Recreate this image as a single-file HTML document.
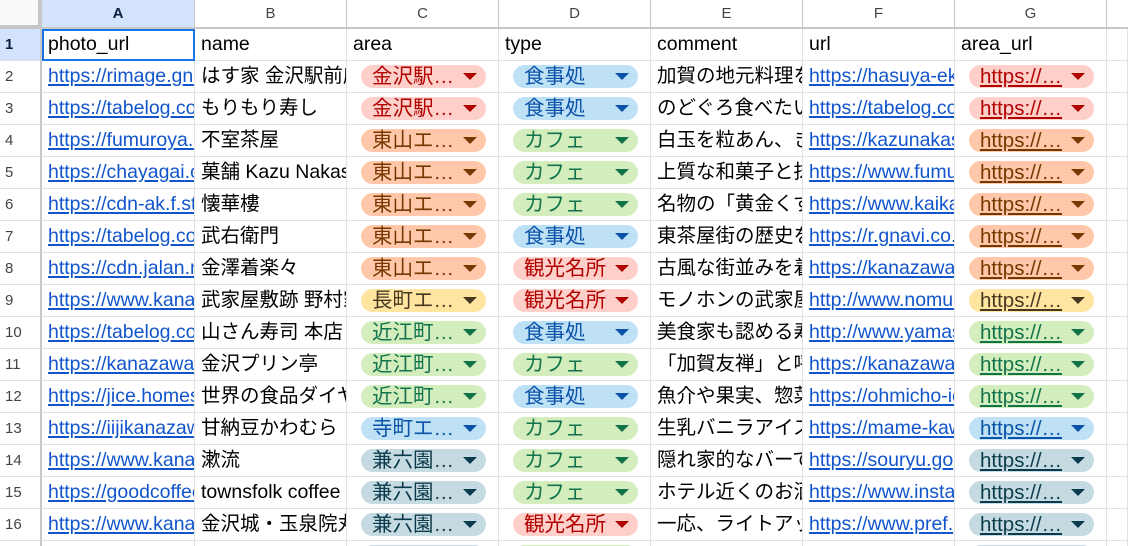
<!DOCTYPE html>
<html><head><meta charset="utf-8"><style>
*{margin:0;padding:0;box-sizing:border-box}
html,body{width:1128px;height:546px;overflow:hidden}
body{background:#fff;font-family:"Liberation Sans","Noto Sans CJK JP",sans-serif;position:relative}
.hdr{position:absolute;top:0;height:29px;border-right:1px solid #c7c7c7;border-bottom:2px solid #c7c7c7;font-size:15px;color:#444;text-align:center;line-height:28px;background:#fff}
.rh{position:absolute;left:0;width:42px;height:32px;border-right:2px solid #c7c7c7;border-bottom:1px solid #e1e1e1;font-size:15px;color:#444;line-height:32px;padding-left:5px;background:#fff}
.row{position:absolute;left:42px;height:32px;width:1086px;border-bottom:1px solid #e1e1e1}
.c{position:absolute;top:0;height:31px;border-right:1px solid #e1e1e1;overflow:hidden;white-space:nowrap;font-size:19.5px;line-height:31px;padding-left:6px;color:#000}
.a{left:0;width:153px}.b{left:153px;width:152px}.cc{left:305px;width:152px}.d{left:457px;width:152px}.e{left:609px;width:152px}.f{left:761px;width:152px}.g{left:913px;width:152px}.h{left:1065px;width:21px}
.l{color:#1155cc;text-decoration:underline;text-decoration-thickness:2px;text-underline-offset:2px}
.chip{position:absolute;left:14px;top:4px;width:125px;height:23px;border-radius:12px;font-size:20.5px;line-height:23px;padding-left:11px;overflow:hidden}
.chip::after{content:"";position:absolute;right:9px;top:8px;border-left:7px solid transparent;border-right:7px solid transparent;border-top:7px solid currentColor}
.r{background:#ffcfc9;color:#b10202}.o{background:#ffc8aa;color:#753800}.gr{background:#d4edbc;color:#11734b}.bl{background:#bfe1f6;color:#0a53a8}.y{background:#ffe5a0;color:#473821}.gy{background:#c6dbe1;color:#0a3b4d}
.u{text-decoration:underline;text-decoration-thickness:2px;text-underline-offset:2px}
</style></head><body>
<div class="hdr" style="left:0;width:42px;background:#f8f9fa;border-right:4px solid #c7c7c7;border-bottom:4px solid #c7c7c7"></div>
<div class="hdr" style="left:42px;width:153px;background:#d3e3fd;font-weight:bold;color:#0b1f3f">A</div>
<div class="hdr" style="left:195px;width:152px">B</div>
<div class="hdr" style="left:347px;width:152px">C</div>
<div class="hdr" style="left:499px;width:152px">D</div>
<div class="hdr" style="left:651px;width:152px">E</div>
<div class="hdr" style="left:803px;width:152px">F</div>
<div class="hdr" style="left:955px;width:152px">G</div>
<div class="hdr" style="left:1107px;width:21px;border-right:none"></div>

<div class="rh" style="top:29px;background:#d3e3fd;font-weight:bold;color:#0b1f3f">1</div>
<div class="row" style="top:29px"><div class="c a">photo_url</div><div class="c b">name</div><div class="c cc">area</div><div class="c d">type</div><div class="c e">comment</div><div class="c f">url</div><div class="c g">area_url</div><div class="c h"></div>
<div style="position:absolute;left:0;top:0;width:153px;height:32px;border:2px solid #1a73e8"></div></div>

<div class="rh" style="top:61px">2</div>
<div class="row" style="top:61px"><div class="c a l">https://rimage.gnavi.co.jp</div><div class="c b">はす家 金沢駅前店</div><div class="c cc"><div class="chip r">金沢駅…</div></div><div class="c d"><div class="chip bl">食事処</div></div><div class="c e">加賀の地元料理を</div><div class="c f l">https://hasuya-eki</div><div class="c g"><div class="chip r"><span class="u">https://…</span></div></div><div class="c h"></div></div>

<div class="rh" style="top:93px">3</div>
<div class="row" style="top:93px"><div class="c a l">https://tabelog.com</div><div class="c b">もりもり寿し</div><div class="c cc"><div class="chip r">金沢駅…</div></div><div class="c d"><div class="chip bl">食事処</div></div><div class="c e">のどぐろ食べたい</div><div class="c f l">https://tabelog.com</div><div class="c g"><div class="chip r"><span class="u">https://…</span></div></div><div class="c h"></div></div>

<div class="rh" style="top:125px">4</div>
<div class="row" style="top:125px"><div class="c a l">https://fumuroya.co.jp</div><div class="c b">不室茶屋</div><div class="c cc"><div class="chip o">東山エ…</div></div><div class="c d"><div class="chip gr">カフェ</div></div><div class="c e">白玉を粒あん、きな</div><div class="c f l">https://kazunakashima</div><div class="c g"><div class="chip o"><span class="u">https://…</span></div></div><div class="c h"></div></div>

<div class="rh" style="top:157px">5</div>
<div class="row" style="top:157px"><div class="c a l">https://chayagai.com</div><div class="c b">菓舗 Kazu Nakashima</div><div class="c cc"><div class="chip o">東山エ…</div></div><div class="c d"><div class="chip gr">カフェ</div></div><div class="c e">上質な和菓子と抹茶</div><div class="c f l">https://www.fumuroya</div><div class="c g"><div class="chip o"><span class="u">https://…</span></div></div><div class="c h"></div></div>

<div class="rh" style="top:189px">6</div>
<div class="row" style="top:189px"><div class="c a l">https://cdn-ak.f.st-hatena</div><div class="c b">懐華樓</div><div class="c cc"><div class="chip o">東山エ…</div></div><div class="c d"><div class="chip gr">カフェ</div></div><div class="c e">名物の「黄金くずきり</div><div class="c f l">https://www.kaikaro</div><div class="c g"><div class="chip o"><span class="u">https://…</span></div></div><div class="c h"></div></div>

<div class="rh" style="top:221px">7</div>
<div class="row" style="top:221px"><div class="c a l">https://tabelog.com</div><div class="c b">武右衛門</div><div class="c cc"><div class="chip o">東山エ…</div></div><div class="c d"><div class="chip bl">食事処</div></div><div class="c e">東茶屋街の歴史を</div><div class="c f l">https://r.gnavi.co.jp</div><div class="c g"><div class="chip o"><span class="u">https://…</span></div></div><div class="c h"></div></div>

<div class="rh" style="top:253px">8</div>
<div class="row" style="top:253px"><div class="c a l">https://cdn.jalan.net</div><div class="c b">金澤着楽々</div><div class="c cc"><div class="chip o">東山エ…</div></div><div class="c d"><div class="chip r">観光名所</div></div><div class="c e">古風な街並みを着物</div><div class="c f l">https://kanazawa</div><div class="c g"><div class="chip o"><span class="u">https://…</span></div></div><div class="c h"></div></div>

<div class="rh" style="top:285px">9</div>
<div class="row" style="top:285px"><div class="c a l">https://www.kanazawa</div><div class="c b">武家屋敷跡 野村家</div><div class="c cc"><div class="chip y">長町エ…</div></div><div class="c d"><div class="chip r">観光名所</div></div><div class="c e">モノホンの武家屋敷</div><div class="c f l">http://www.nomurake</div><div class="c g"><div class="chip y"><span class="u">https://…</span></div></div><div class="c h"></div></div>

<div class="rh" style="top:317px">10</div>
<div class="row" style="top:317px"><div class="c a l">https://tabelog.com</div><div class="c b">山さん寿司 本店</div><div class="c cc"><div class="chip gr">近江町…</div></div><div class="c d"><div class="chip bl">食事処</div></div><div class="c e">美食家も認める寿司</div><div class="c f l">http://www.yamasan</div><div class="c g"><div class="chip gr"><span class="u">https://…</span></div></div><div class="c h"></div></div>

<div class="rh" style="top:349px">11</div>
<div class="row" style="top:349px"><div class="c a l">https://kanazawa</div><div class="c b">金沢プリン亭</div><div class="c cc"><div class="chip gr">近江町…</div></div><div class="c d"><div class="chip gr">カフェ</div></div><div class="c e">「加賀友禅」と呼ぶ</div><div class="c f l">https://kanazawa</div><div class="c g"><div class="chip gr"><span class="u">https://…</span></div></div><div class="c h"></div></div>

<div class="rh" style="top:381px">12</div>
<div class="row" style="top:381px"><div class="c a l">https://jice.homes</div><div class="c b">世界の食品ダイヤ</div><div class="c cc"><div class="chip gr">近江町…</div></div><div class="c d"><div class="chip bl">食事処</div></div><div class="c e">魚介や果実、惣菜</div><div class="c f l">https://ohmicho-ichiba</div><div class="c g"><div class="chip gr"><span class="u">https://…</span></div></div><div class="c h"></div></div>

<div class="rh" style="top:413px">13</div>
<div class="row" style="top:413px"><div class="c a l">https://iijikanazawa</div><div class="c b">甘納豆かわむら</div><div class="c cc"><div class="chip bl">寺町エ…</div></div><div class="c d"><div class="chip gr">カフェ</div></div><div class="c e">生乳バニラアイス</div><div class="c f l">https://mame-kawamura</div><div class="c g"><div class="chip bl"><span class="u">https://…</span></div></div><div class="c h"></div></div>

<div class="rh" style="top:445px">14</div>
<div class="row" style="top:445px"><div class="c a l">https://www.kanazawa</div><div class="c b">漱流</div><div class="c cc"><div class="chip gy">兼六園…</div></div><div class="c d"><div class="chip gr">カフェ</div></div><div class="c e">隠れ家的なバーで</div><div class="c f l">https://souryu.go</div><div class="c g"><div class="chip gy"><span class="u">https://…</span></div></div><div class="c h"></div></div>

<div class="rh" style="top:477px">15</div>
<div class="row" style="top:477px"><div class="c a l">https://goodcoffee</div><div class="c b">townsfolk coffee</div><div class="c cc"><div class="chip gy">兼六園…</div></div><div class="c d"><div class="chip gr">カフェ</div></div><div class="c e">ホテル近くのお洒落</div><div class="c f l">https://www.instagram</div><div class="c g"><div class="chip gy"><span class="u">https://…</span></div></div><div class="c h"></div></div>

<div class="rh" style="top:509px">16</div>
<div class="row" style="top:509px"><div class="c a l">https://www.kanazawa</div><div class="c b">金沢城・玉泉院丸</div><div class="c cc"><div class="chip gy">兼六園…</div></div><div class="c d"><div class="chip r">観光名所</div></div><div class="c e">一応、ライトアップ</div><div class="c f l">https://www.pref.</div><div class="c g"><div class="chip gy"><span class="u">https://…</span></div></div><div class="c h"></div></div>

<div class="rh" style="top:541px"></div>
<div class="row" style="top:541px"><div class="c a"></div><div class="c b"></div><div class="c cc"><div class="chip gy"></div></div><div class="c d"><div class="chip gr"></div></div><div class="c e"></div><div class="c f"></div><div class="c g"><div class="chip gy"></div></div><div class="c h"></div></div>
</body></html>
